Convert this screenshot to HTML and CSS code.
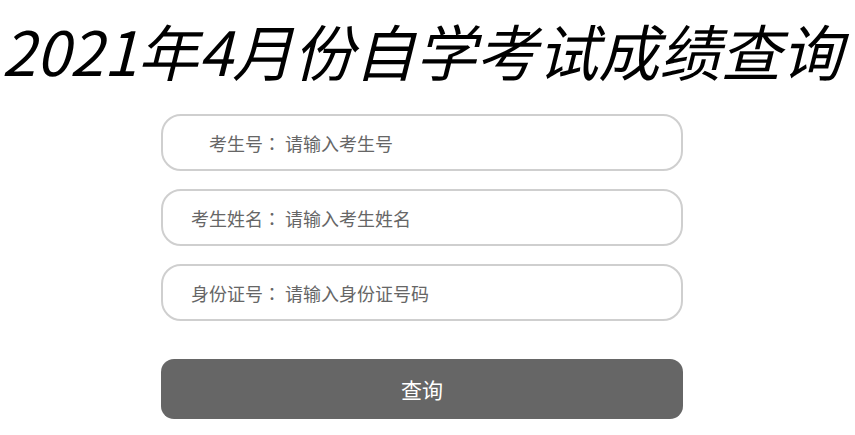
FILE: index.html
```
<!DOCTYPE html>
<html lang="zh-CN">
<head>
<meta charset="utf-8">
<title>2021年4月份自学考试成绩查询</title>
<link rel="stylesheet" href="styles.css">
</head>
<body>
<div class="page">
  <h1 class="title">2021年4月份自学考试成绩查询</h1>
  <form class="query-form">
    <label class="field">
      <span class="field-label">考生号<span class="colon" lang="zh-TW">：</span></span>
      <input class="field-input" type="text" placeholder="请输入考生号">
    </label>
    <label class="field">
      <span class="field-label">考生姓名<span class="colon" lang="zh-TW">：</span></span>
      <input class="field-input" type="text" placeholder="请输入考生姓名">
    </label>
    <label class="field">
      <span class="field-label">身份证号<span class="colon" lang="zh-TW">：</span></span>
      <input class="field-input" type="text" placeholder="请输入身份证号码">
    </label>
    <button class="submit" type="button">查询</button>
  </form>
</div>
</body>
</html>
```
FILE: styles.css
```
html, body {
  margin: 0;
  padding: 0;
  background: #fff;
}

body {
  font-family: "Noto Sans CJK SC", "Noto Sans", sans-serif;
  color: #666;
}

.page {
  padding-right: 11px;
  padding-top: 13px;
}

.title {
  margin: 0;
  text-align: center;
  font-size: 61px;
  font-weight: normal;
  font-style: italic;
  color: #000;
  line-height: 74px;
  white-space: nowrap;
}

.query-form {
  width: 522px;
  margin: 27px auto 0;
  display: flex;
  flex-direction: column;
}

.field {
  display: flex;
  align-items: center;
  height: 57px;
  box-sizing: border-box;
  border: 2px solid #cfcfcf;
  border-radius: 20px;
  margin-bottom: 18px;
}

.field-label {
  width: 118px;
  flex: none;
  text-align: right;
  font-size: 18px;
  color: #666;
}

.colon {
  font-family: "Noto Sans CJK TC", "Noto Sans CJK SC", sans-serif;
}

.field-input {
  flex: 1;
  min-width: 0;
  border: 0;
  outline: 0;
  background: transparent;
  margin-left: 4px;
  padding: 0;
  font-family: inherit;
  font-size: 18px;
  color: #666;
}

.field-input::placeholder {
  color: #666;
  opacity: 1;
}

.submit {
  margin-top: 20px;
  height: 60px;
  border: 0;
  border-radius: 13px;
  background: #666;
  color: #fff;
  font-family: inherit;
  font-size: 21px;
  cursor: pointer;
}
```
